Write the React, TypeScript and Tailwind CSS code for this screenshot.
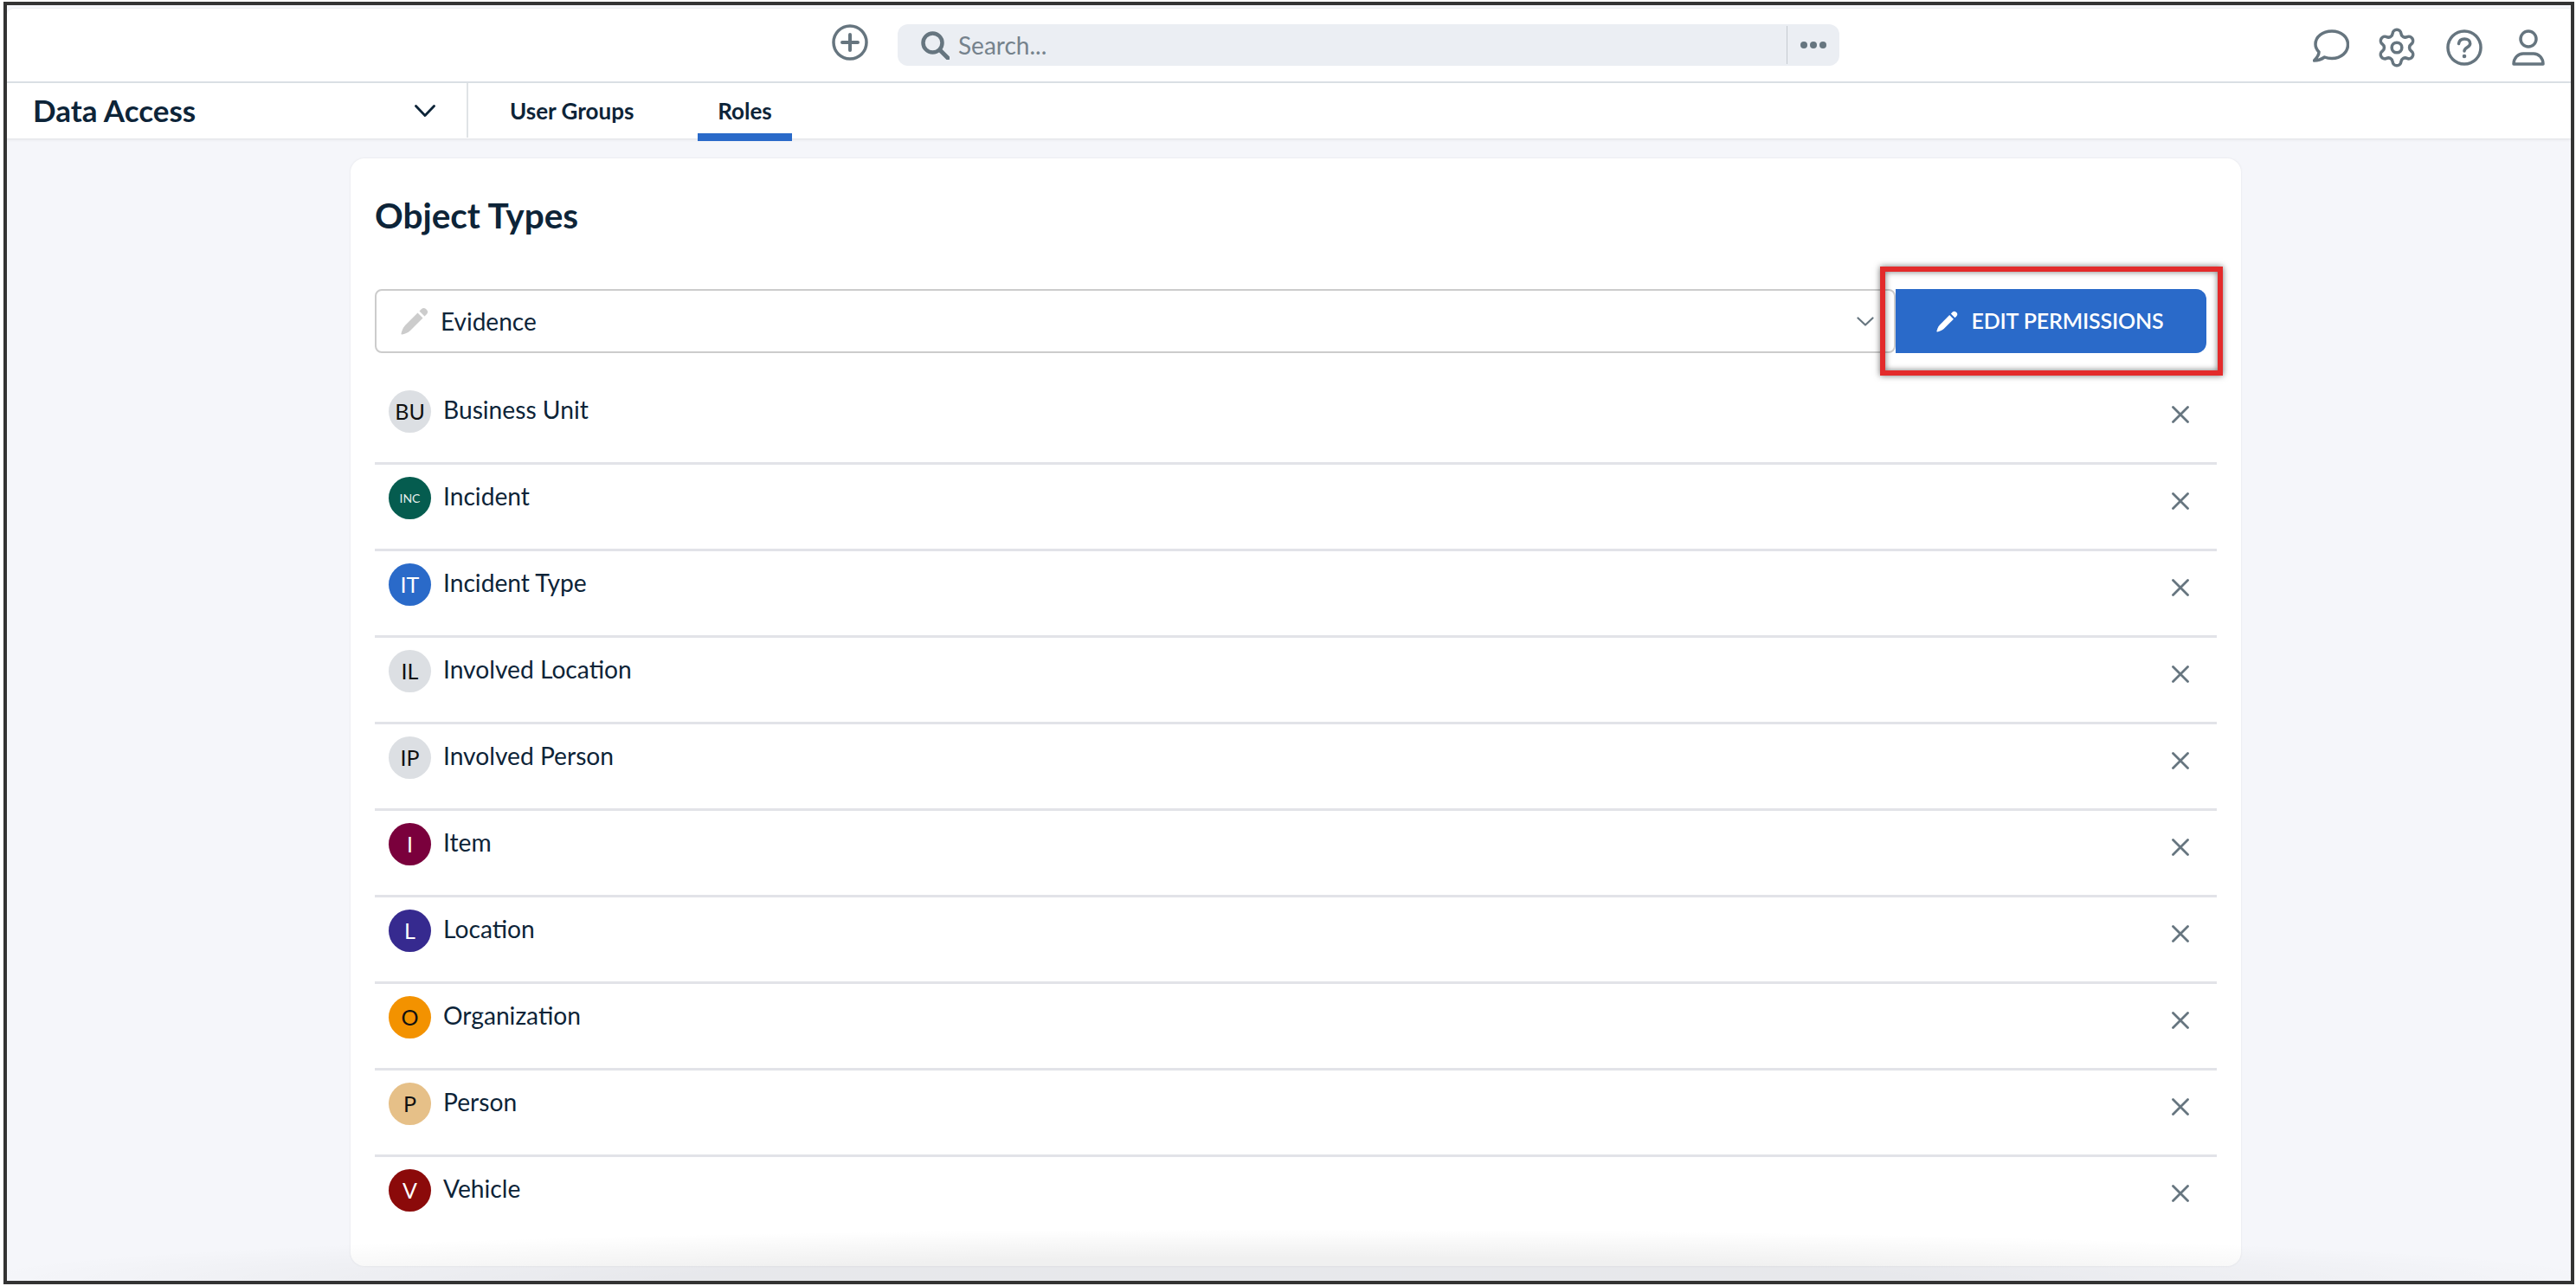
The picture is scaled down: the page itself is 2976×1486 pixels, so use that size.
import React from "react";

const font = { fontFamily: '"Lato", "Noto Sans", sans-serif' };

const rows: { abbr: string; name: string; bg: string; fg: string; small?: boolean }[] = [
  { abbr: "BU", name: "Business Unit", bg: "bg-[#dcdfe3]", fg: "text-[#111]" },
  { abbr: "INC", name: "Incident", bg: "bg-[#055c4f]", fg: "text-[#e4eeec]", small: true },
  { abbr: "IT", name: "Incident Type", bg: "bg-[#2a6ac9]", fg: "text-white" },
  { abbr: "IL", name: "Involved Location", bg: "bg-[#dcdfe3]", fg: "text-[#111]" },
  { abbr: "IP", name: "Involved Person", bg: "bg-[#dcdfe3]", fg: "text-[#111]" },
  { abbr: "I", name: "Item", bg: "bg-[#7a003c]", fg: "text-white" },
  { abbr: "L", name: "Location", bg: "bg-[#362a8f]", fg: "text-white" },
  { abbr: "O", name: "Organization", bg: "bg-[#f39200]", fg: "text-[#111]" },
  { abbr: "P", name: "Person", bg: "bg-[#e6c088]", fg: "text-[#111]" },
  { abbr: "V", name: "Vehicle", bg: "bg-[#8b0a0a]", fg: "text-white" },
];

function Pencil({ size, color }: { size: number; color: string }) {
  return (
    <svg width={size} height={size} viewBox="0 0 32 32" fill={color}>
      <path d="M19.500 6.500L25.500 12.500L11 27C8.500 29.500 4 31 1.500 31.500C.8 31.600.4 31.200.5 30.500C1 28 2.500 23.500 5 21Z" />
      <path d="M21.500 4.500L24 2C25.500.5 27.500.5 29 2L30 3C31.500 4.500 31.500 6.500 30 8L27.500 10.500Z" />
    </svg>
  );
}
function SearchIcon() {
  return (
    <svg width="33" height="33" viewBox="0 0 33 33" fill="none" stroke="#66757f" strokeLinecap="round">
      <circle cx="13.500" cy="13.500" r="11" strokeWidth="4.500" />
      <path d="M22 22L31 31" strokeWidth="5" />
    </svg>
  );
}
function PlusIcon() {
  return (
    <svg width="42" height="42" viewBox="0 0 42 42" fill="none" stroke="#66757f">
      <circle cx="21" cy="21" r="19" strokeWidth="3.500" />
      <path d="M21 12v18M12 21h18" strokeWidth="4" strokeLinecap="round" />
    </svg>
  );
}
function CommentIcon() {
  return (
    <svg width="42" height="38" viewBox="0 0 42 38" fill="none" stroke="#66757f" strokeWidth="3.500" strokeLinejoin="round">
      <path d="M22 2C11 2 3 8.500 3 17C3 20.500 4.500 23.500 7 26C7 29.500 4.500 33 1.500 36C6 36 10 34.500 13.500 32C16 33 19 33.500 22 33.500C32.500 33.500 40.500 26.500 40.500 17.500C40.500 8.500 32.500 2 22 2Z" />
    </svg>
  );
}
function GearIcon() {
  return (
    <svg width="50" height="50" viewBox="0 0 24 24" fill="none" stroke="#66757f" strokeWidth="1.700" strokeLinecap="round" strokeLinejoin="round">
      <path d="M9.670 4.140a2.340 2.340 0 0 1 4.660 0 2.340 2.340 0 0 0 3.320 1.910 2.340 2.340 0 0 1 2.330 4.030 2.340 2.340 0 0 0 0 3.830 2.340 2.340 0 0 1-2.330 4.040 2.340 2.340 0 0 0-3.320 1.910 2.340 2.340 0 0 1-4.660 0 2.340 2.340 0 0 0-3.320-1.910 2.340 2.340 0 0 1-2.330-4.040 2.340 2.340 0 0 0 0-3.830 2.340 2.340 0 0 1 2.330-4.030 2.340 2.340 0 0 0 3.320-1.910Z" />
      <circle cx="12" cy="12" r="2.800" />
    </svg>
  );
}
function HelpIcon() {
  return (
    <svg width="42" height="42" viewBox="0 0 42 42" fill="none" stroke="#66757f">
      <circle cx="21" cy="21" r="19" strokeWidth="3.500" />
      <path d="M14.500 16.500c.5-3.500 3.300-5.500 6.700-5.500 3.800 0 6.500 2.200 6.500 5.200 0 4.800-6.700 4.300-6.700 8.800" strokeWidth="3.500" strokeLinecap="round" />
      <circle cx="21" cy="31" r="2.300" fill="#66757f" stroke="none" />
    </svg>
  );
}
function UserIcon() {
  return (
    <svg width="38" height="42" viewBox="0 0 38 42" fill="none" stroke="#66757f" strokeWidth="3.500" strokeLinejoin="round">
      <circle cx="19" cy="11" r="9" />
      <path d="M2 40c0-7 5-12 11-12h12c6 0 11 5 11 12Z" />
    </svg>
  );
}
function XIcon() {
  return (
    <svg width="20" height="20" viewBox="0 0 20 20" fill="none" stroke="#66757f" strokeWidth="2.800" strokeLinecap="round">
      <path d="M1.500 1.500l17 17M18.500 1.500l-17 17" />
    </svg>
  );
}
function Chevron({ w, h, color, sw }: { w: number; h: number; color: string; sw: number }) {
  return (
    <svg width={w} height={h} viewBox={`0 0 ${w} ${h}`} fill="none" stroke={color} strokeWidth={sw} strokeLinecap="round" strokeLinejoin="round">
      <path d={`M1.500 1.500L${w / 2} ${h - 1.5}L${w - 1.5} 1.500`} />
    </svg>
  );
}

export default function App() {
  return (
    <div style={font} className="w-[2976px] h-[1486px] bg-white pt-[2px] pb-[2px] pl-[4px] pr-[2px] overflow-hidden">
      <div className="relative w-full h-full border-4 border-[#333333] bg-[#f5f6fa] flex flex-col overflow-hidden">
        {/* top bar */}
        <header className="h-[87px] shrink-0 bg-white border-t border-t-[#eceef0] mt-[3px] rounded-tl-[8px] border-b-2 border-b-[#dbe0e5] flex items-start pt-[18px] pr-[30px]">
          <div className="ml-[953px]">
            <PlusIcon />
          </div>
          <div className="ml-[34px] w-[1088px] h-[48px] bg-[#ebeef3] rounded-[12px] flex items-center pl-[27px] relative">
            <SearchIcon />
            <span className="ml-[10px] text-[28px] text-[#75828c]">Search...</span>
            <div className="ml-auto w-[61px] h-[44px] border-l border-l-[#c5cad0] flex items-center justify-center gap-[3px]">
              <span className="w-[8px] h-[8px] rounded-full bg-[#66757f]" />
              <span className="w-[8px] h-[8px] rounded-full bg-[#66757f]" />
              <span className="w-[8px] h-[8px] rounded-full bg-[#66757f]" />
            </div>
          </div>
          <div className="ml-auto flex items-start pt-[6px]">
            <CommentIcon />
            <div className="ml-[30px] mt-[-4px]"><GearIcon /></div>
            <div className="ml-[32px]"><HelpIcon /></div>
            <div className="ml-[34px]"><UserIcon /></div>
          </div>
        </header>

        {/* nav */}
        <nav className="h-[65px] shrink-0 bg-white border-b border-b-[#e4e6ea] shadow-[0_1px_3px_rgba(0,0,0,0.06)] flex items-stretch">
          <div className="w-[533px] h-[63px] border-r-2 border-r-[#e0e3e6] flex items-center pl-[30px] pr-[36px] justify-between">
            <span className="text-[35px] font-bold text-[#0d2438] leading-none">Data Access</span>
            <Chevron w={24} h={14} color="#0d2438" sw={2.8} />
          </div>
          <div className="ml-[48px] flex items-center h-[65px] text-[26px] font-bold text-[#0d2438]">
            <span className="w-[144px] whitespace-nowrap">User Groups</span>
            <div className="relative ml-[73px] w-[109px] h-full flex items-center justify-center">
              <span>Roles</span>
              <span className="absolute left-0 right-0 bottom-[-2px] h-[9px] bg-[#2a6ac9]" />
            </div>
          </div>
        </nav>

        {/* card */}
        <main className="flex-1 min-h-0 pl-[397px] pt-[22px]">
          <section className="w-[2184px] h-[1280px] bg-white rounded-[16px] shadow-[0_0_3px_rgba(0,0,0,0.08)] pl-[28px] pr-[28px] pt-[40px]">
            <h1 className="text-[40.500px] leading-[52px] font-bold text-[#0d2438]">Object Types</h1>
            <div className="mt-[59px] flex h-[74px] pr-[12px]">
              <div className="flex-1 border-2 border-[#cccccc] rounded-[8px] flex items-center pl-[28px] pr-[23px]">
                <Pencil size={32} color="#cccccc" />
                <span className="ml-[14px] text-[28px] text-[#0d2438]">Evidence</span>
                <span className="ml-auto">
                  <Chevron w={20} h={11} color="#66757f" sw={2.2} />
                </span>
              </div>
              <button className="relative w-[359px] bg-[#2a6ac9] rounded-r-[12px] flex items-center justify-center gap-[15px] text-white text-[25px] font-semibold tracking-[-0.15px] pr-[2px]">
                <Pencil size={25} color="#ffffff" />
                <span>EDIT PERMISSIONS</span>
                <span className="absolute left-[-18px] top-[-26px] w-[396px] h-[126px] border-[6px] border-[#e32b2b] shadow-[0_0_7px_rgba(0,0,0,0.55),inset_0_0_7px_rgba(0,0,0,0.55)]" />
              </button>
            </div>
            <ul className="mt-[29px]">
              {rows.map((r, i) => (
                <li
                  key={r.name}
                  className={`h-[100px] pl-[16px] pr-[32px] flex items-start ${i < rows.length - 1 ? "border-b-[3px] border-b-[#e2e3e8]" : ""}`}
                >
                  <span className={`mt-[14px] w-[49px] h-[49px] rounded-full flex items-center justify-center shrink-0 ${r.bg} ${r.fg} ${r.small ? "text-[14px]" : "text-[25px]"}`}>
                    {r.abbr}
                  </span>
                  <span className="mt-[12px] ml-[14px] h-[49px] flex items-center text-[28.200px] text-[#0d2438]">{r.name}</span>
                  <span className="ml-auto mt-[32px]">
                    <XIcon />
                  </span>
                </li>
              ))}
            </ul>
          </section>
        </main>

        {/* bottom vignette */}
        <div className="absolute left-0 right-0 bottom-0 h-[60px] pointer-events-none bg-[radial-gradient(ellipse_52%_100%_at_50%_100%,rgba(0,0,0,0.06)_0%,rgba(0,0,0,0.06)_45%,rgba(0,0,0,0)_100%)]" />
      </div>
    </div>
  );
}
